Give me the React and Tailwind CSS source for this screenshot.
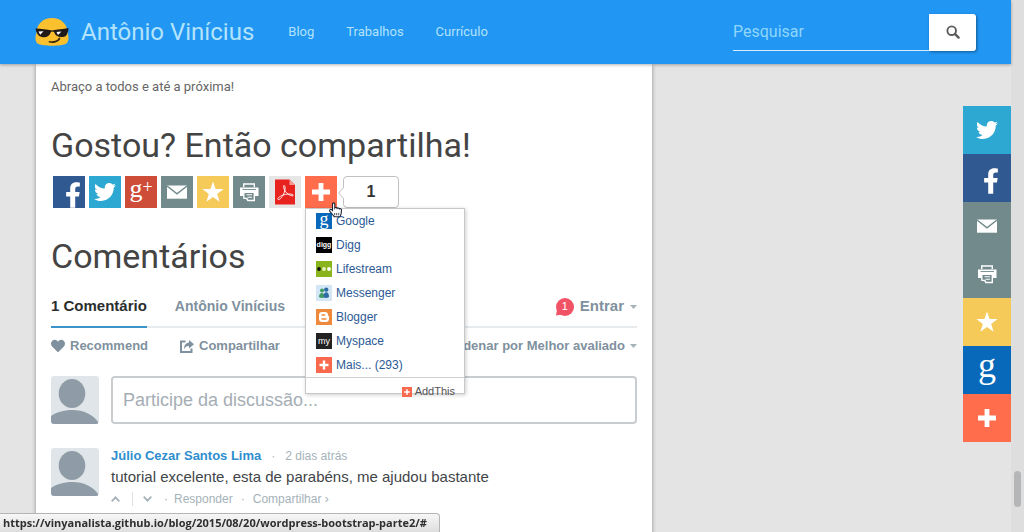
import React from "react";
import { FaTwitter, FaFacebookF, FaHeart } from "react-icons/fa";

function SunglassesFace() {
  return (
    <svg viewBox="0 0 34 30" className="h-[30px] w-[34px]" aria-hidden="true">
      <path d="M1.5 16C1.5 7 8 1 17 1s15.5 6 15.5 15c1.500 4 1.500 8-1 10.500C27 29.500 7 29.500 2.500 26.500 0 24 0 20 1.500 16z" fill="#fbc02d" />
      <path d="M.5 11.500C6 12 12 12.300 17 13.500c5-1.200 11-1.500 16.500-2.500l-.3 3.200c-.9.6-.8 5-4.200 5.500-5.500.9-8.500-.7-10-4.700-.7-.8-2.600-.8-3.200.2-1.400 4-4.600 5.700-9 4.800-4.400-.8-4.700-4.800-5.600-5.500z" fill="#1f1a17" />
      <path d="M3.500 14.500l5-.3-3.300 3.600zM21.500 15l5-.5-3.500 3.600z" fill="#fff" />
      <path d="M14.500 24.800c4 1 8.500-.3 10-3.300" stroke="#3b2a10" strokeWidth="1.700" fill="none" strokeLinecap="round" />
    </svg>
  );
}

function SearchGlyph() {
  return (
    <svg viewBox="0 0 14 14" className="h-3.5 w-3.5" fill="none" stroke="#5c5c5c" aria-hidden="true">
      <circle cx="5.700" cy="5.700" r="4.300" strokeWidth="1.900" />
      <path d="M8.900 8.900l3.700 3.700" strokeWidth="2.400" strokeLinecap="round" />
    </svg>
  );
}

function Envelope() {
  return (
    <svg viewBox="0 0 32 32" className="h-8 w-8" aria-hidden="true">
      <path d="M6 9.500h20v13.200H6z" fill="#fff" />
      <path d="M6 10l10 7.800L26 10" stroke="#738a8d" strokeWidth="1.500" fill="none" />
    </svg>
  );
}

function Printer() {
  return (
    <svg viewBox="0 0 32 32" className="h-8 w-8" aria-hidden="true">
      <path d="M10.700 11V8h10.600v3" stroke="#fff" strokeWidth="1.400" fill="none" />
      <path d="M7 11.500h18.500V20H22v-3.500H10.500V20H7z" fill="#fff" />
      <path d="M9.500 13.500h13.500" stroke="#738a8d" strokeWidth=".9" />
      <path d="M10.800 16.200v6l3 .3 1 2h6.500v-8.300z" stroke="#fff" strokeWidth="1.400" fill="#738a8d" />
      <path d="M13.500 18.700h5.500M14.500 21.300h4.500" stroke="#fff" strokeWidth="1.100" />
    </svg>
  );
}

function Star() {
  return (
    <svg viewBox="0 0 32 32" className="h-8 w-8" fill="#fff" aria-hidden="true">
      <path d="M16 5.500l2.600 7.600h8l-6.400 4.800 2.400 7.900L16 21l-6.600 4.800 2.400-7.900-6.400-4.800h8z" />
    </svg>
  );
}

function Plus({ className }) {
  return (
    <svg viewBox="0 0 32 32" className={className} fill="#fff" aria-hidden="true">
      <path d="M13.600 7h4.800v6.600H25v4.800h-6.600V25h-4.800v-6.600H7v-4.800h6.600z" />
    </svg>
  );
}

function Pdf() {
  return (
    <svg viewBox="0 0 32 32" className="h-8 w-8" aria-hidden="true">
      <path d="M6 3.500h14.500L26 9v19.500H6z" fill="#e8231f" />
      <path d="M20.500 3.500V9H26z" fill="#f59a94" />
      <path d="M15 9.500c1.800 0 1.300 5-.4 8.500-1.600 3.400-4.200 6.300-5.600 5.400-1.500-1.200 3.200-4.200 7.500-5 3.800-.7 7.800-.4 7.700.9-.2 1.600-5.200-.4-7.500-3.500-1.900-2.500-2.700-6.300-1.700-6.300z" fill="none" stroke="#fff" strokeWidth=".9" />
    </svg>
  );
}

function Avatar() {
  return (
    <svg viewBox="0 0 48 48" className="h-12 w-12 shrink-0 rounded-[3px]" role="img" aria-label="Avatar">
      <path d="M0 0h48v48H0z" fill="#dfe5e8" />
      <ellipse cx="21" cy="17.500" rx="13.300" ry="14.500" fill="#8f9ca7" />
      <path d="M0 48v-8c5-3.500 12.500-6 21.500-6 11 0 20.500 4.500 25.500 12v2z" fill="#8f9ca7" />
    </svg>
  );
}

function Caret() {
  return (
    <svg viewBox="0 0 7 4" className="h-1 w-[7px]" fill="#a5b2b9" aria-hidden="true">
      <path d="M0 0h7L3.500 4z" />
    </svg>
  );
}

function ShareGlyph() {
  return (
    <svg viewBox="0 0 14 13" className="h-[13px] w-3.5" aria-hidden="true">
      <path d="M5.500 1.500H1v10.500h10.500V8.500" fill="none" stroke="#7f919e" strokeWidth="2" />
      <path d="M9 0l5 4.200-5 4.300V6C6.500 6 5 7 4 9.300 4 5.500 5.700 3 9 2.600z" fill="#7f919e" />
    </svg>
  );
}

function HandCursor() {
  return (
    <svg viewBox="0 0 14 16" className="pointer-events-none absolute left-6 top-[26px] z-20 h-4 w-3.5" aria-hidden="true">
      <path d="M3.500 8.500V2c0-1.500 2.300-1.500 2.300 0v4c.5-.8 2-.8 2.300.3.600-.7 1.900-.5 2.200.6.700-.6 2.200-.3 2.200 1.100 0 3-.2 4.500-1.500 6.800H5.200C4.200 12.500 1.800 11 .7 9c-.4-1.300 1-2 1.800-1.300z" fill="#fff" stroke="#1c2333" strokeWidth="1.100" />
      <path d="M5.700 11v2.300M7.700 11v2.300M9.700 11v2.300" stroke="#1c2333" strokeWidth=".8" />
    </svg>
  );
}

function BuddyIcon() {
  return (
    <svg viewBox="0 0 16 16" className="h-4 w-4" aria-hidden="true">
      <circle cx="6" cy="5.500" r="2" fill="#3f9a63" />
      <path d="M3 12c0-5.500 5.500-5.500 6 0-2 1.300-4.500 1.300-6 0z" fill="#3f9a63" />
      <circle cx="10.200" cy="4.600" r="2.200" fill="#2e6ca6" />
      <path d="M7.400 12c-.3-6.500 5.900-6.500 5.600 0-1.800 1.400-4 1.400-5.600 0z" fill="#2e6ca6" />
    </svg>
  );
}

function BloggerIcon() {
  return (
    <svg viewBox="0 0 16 16" className="h-4 w-4" aria-hidden="true">
      <path d="M6 3h3c2 0 3 1.200 3 3 0 .8.300 1 1 1v3c0 1.900-1.200 3-3 3H6c-1.900 0-3-1.200-3-3V6c0-1.900 1.200-3 3-3z" fill="#fff" />
      <path d="M6 6h2.700M6 10h4" stroke="#ef8a3c" strokeWidth="1.300" strokeLinecap="round" />
    </svg>
  );
}

function LifestreamIcon() {
  return (
    <svg viewBox="0 0 16 16" className="h-4 w-4" aria-hidden="true">
      <circle cx="3" cy="8" r="1.900" fill="#111" />
      <circle cx="8" cy="8" r="1.900" fill="#e9f3c2" />
      <circle cx="13" cy="8" r="1.900" fill="#fff" />
    </svg>
  );
}

const shareButtons = [
  { name: "Facebook", bg: "bg-[#305891]", icon: <FaFacebookF className="ml-2 mt-1.5 h-[26px] w-4" /> },
  { name: "Twitter", bg: "bg-[#2ca8d2]", icon: <FaTwitter className="h-[22px] w-[22px]" /> },
  { name: "Google+", bg: "bg-[#ce4d39]", icon: <span className="flex pb-1.5 font-['Liberation_Serif',serif] leading-6"><span className="text-[26px]">g</span><span className="text-lg leading-5">+</span></span> },
  { name: "Email", bg: "bg-[#738a8d]", icon: <Envelope /> },
  { name: "Favoritos", bg: "bg-[#f5ca59]", icon: <Star /> },
  { name: "Imprimir", bg: "bg-[#738a8d]", icon: <Printer /> },
  { name: "PDF", bg: "bg-[#e6e6e6]", icon: <Pdf /> },
];

const menuItems = [
  { name: "Google", bg: "bg-[#0868b9]", icon: <span className="pb-1 font-['Liberation_Serif',serif] text-lg leading-3">g</span> },
  { name: "Digg", bg: "bg-black", icon: <span className="text-[7px] font-bold leading-4">digg</span> },
  { name: "Lifestream", bg: "bg-[#8ab41d]", icon: <LifestreamIcon /> },
  { name: "Messenger", bg: "bg-[#d3e6f5]", icon: <BuddyIcon /> },
  { name: "Blogger", bg: "bg-[#ef8a3c]", icon: <BloggerIcon /> },
  { name: "Myspace", bg: "bg-[#222222]", icon: <span className="text-[9px] leading-3">my</span> },
  { name: "Mais... (293)", bg: "bg-[#f8694d]", icon: <Plus className="h-4 w-4" /> },
];

const sideButtons = [
  { name: "Twitter", bg: "bg-[#2ca8d2]", icon: <FaTwitter className="h-[22px] w-[22px]" /> },
  { name: "Facebook", bg: "bg-[#305891]", icon: <FaFacebookF className="ml-2 mt-1.5 h-[26px] w-4" /> },
  { name: "Email", bg: "bg-[#738a8d]", icon: <Envelope /> },
  { name: "Imprimir", bg: "bg-[#738a8d]", icon: <Printer /> },
  { name: "Favoritos", bg: "bg-[#f5ca59]", icon: <Star /> },
  { name: "Google", bg: "bg-[#0868b9]", icon: <span className="pb-2.5 font-['Liberation_Serif',serif] text-4xl leading-6">g</span> },
  { name: "Mais", bg: "bg-[#ff6d4c]", icon: <Plus className="h-8 w-8" /> },
];

function Navbar() {
  return (
    <header className="relative z-10 flex h-16 items-center bg-[#2196f3] pl-[35px] pr-[35px] text-[#b2e3fb] shadow-[0_1px_3px_rgba(0,0,0,0.3)]">
      <a href="#inicio" className="flex items-center gap-3 text-2xl">
        <SunglassesFace />
        Antônio Vinícius
      </a>
      <nav className="ml-[34px] flex gap-8 text-[13px]">
        <a href="#blog">Blog</a>
        <a href="#trabalhos">Trabalhos</a>
        <a href="#curriculo">Currículo</a>
      </nav>
      <form className="ml-auto flex" role="search">
        <input
          type="search"
          aria-label="Pesquisar"
          placeholder="Pesquisar"
          className="h-[37px] w-49 border-b border-[#d3eafd] bg-transparent text-base outline-none placeholder:text-[#8fd6fa]"
        />
        <button type="button" aria-label="Buscar" className="flex h-[37px] w-[47px] items-center justify-center rounded-r-[3px] bg-white shadow-[1px_1px_3px_rgba(0,0,0,0.4)]">
          <SearchGlyph />
        </button>
      </form>
    </header>
  );
}

function ShareMenu() {
  return (
    <div className="absolute left-0 top-8 z-10 w-40 border border-[#c8c8c8] bg-white font-['Liberation_Sans',sans-serif] text-xs text-[#2c5a96] shadow-[1px_1px_4px_rgba(0,0,0,0.2)]">
      <ul>
        {menuItems.map((item) => (
          <li key={item.name}>
            <a href="#compartilhar" className="flex h-6 items-center gap-1 pl-2.5">
              <span className={`flex h-4 w-4 items-center justify-center text-white ${item.bg}`} aria-hidden="true">{item.icon}</span>
              {item.name}
            </a>
          </li>
        ))}
      </ul>
      <a href="#addthis" className="flex h-4 items-end justify-end border-t border-[#d0d0d0] pr-[9px] text-[11px] leading-none text-[#555]">
        <span className="flex translate-y-1 items-center gap-[3px]">
          <span className="bg-[#f8694d]"><Plus className="h-2.5 w-2.5" /></span>
          AddThis
        </span>
      </a>
    </div>
  );
}

function ShareBar() {
  return (
    <div className="mt-3 flex gap-1 pl-0.5">
      {shareButtons.map((b) => (
        <a key={b.name} href="#compartilhar" aria-label={b.name} className={`flex h-8 w-8 items-center justify-center text-white ${b.bg}`}>
          {b.icon}
        </a>
      ))}
      <div className="relative">
        <button type="button" aria-label="Mais opções" className="block bg-[#ff6d4c]">
          <Plus className="h-8 w-8" />
        </button>
        <ShareMenu />
        <HandCursor />
      </div>
      <div className="relative ml-0.5 flex h-8 w-14 items-center justify-center rounded-[4px] border border-[#c0c0c0] bg-white font-['Liberation_Sans',sans-serif] text-base font-bold text-[#333]">
        <svg viewBox="0 0 6 12" className="absolute -left-1.5 top-2.5 h-3 w-1.5" aria-hidden="true">
          <path d="M6 0L.7 6 6 12" fill="#fff" stroke="#c0c0c0" />
        </svg>
        1
      </div>
    </div>
  );
}

function Comments() {
  return (
    <section className="font-['Liberation_Sans',sans-serif] text-[#7f919e]">
      <div className="mt-3 flex border-b-2 border-[#e7ebee] text-[15px] font-bold">
        <a href="#comentarios" className="-mb-0.5 flex h-[41px] items-center border-b-2 border-[#3c93c9] text-[#2a2e2e]">1 Comentário</a>
        <a href="#autor" className="ml-7 flex h-[38px] items-center text-sm">Antônio Vinícius</a>
        <button type="button" className="ml-auto flex h-[39px] items-center gap-1.5 font-bold">
          <span className="relative flex h-[18px] w-[18px] items-center justify-center rounded-full bg-[#f05266] text-[11px] font-normal text-white">
            <svg viewBox="0 0 6 6" className="absolute bottom-0 left-0 h-1.5 w-1.5" fill="#f05266" aria-hidden="true"><path d="M0 5.500L1 0l5 4.500z" /></svg>
            1
          </span>
          Entrar
          <Caret />
        </button>
      </div>
      <div className="mt-2 flex h-5 items-center text-[13px] font-bold">
        <button type="button" className="flex items-center gap-[5px] font-bold"><FaHeart className="h-3.5 w-3.5" />Recommend</button>
        <button type="button" className="ml-8 flex items-center gap-[5px] font-bold"><ShareGlyph />Compartilhar</button>
        <button type="button" className="ml-auto flex items-center gap-[5px] font-bold">Ordenar por Melhor avaliado<Caret /></button>
      </div>
      <div className="mt-5 flex gap-3">
        <Avatar />
        <input
          type="text"
          aria-label="Participe da discussão"
          placeholder="Participe da discussão..."
          className="h-12 min-w-0 flex-1 rounded-[4px] border-2 border-[#c9cdd0] bg-white px-2.5 text-lg outline-none placeholder:text-[#a5aeb5]"
        />
      </div>
      <article className="mt-6 flex gap-3">
        <Avatar />
        <div className="min-w-0 text-xs text-[#a5b2b9]">
          <p className="flex h-4 items-center">
            <a href="#julio" className="text-[13px] font-bold text-[#2e8ece]">Júlio Cezar Santos Lima</a>
            <span className="mx-2.5">·</span>
            2 dias atrás
          </p>
          <p className="mt-px text-[15px] leading-6 text-[#3f4549]">tutorial excelente, esta de parabéns, me ajudou bastante</p>
          <div className="mt-0.5 flex h-4 items-center">
            <button type="button" aria-label="Votar a favor" className="mr-3">
              <svg viewBox="0 0 9 6" className="h-1.5 w-[9px]" fill="none" stroke="#a5b2b9" strokeWidth="1.800"><path d="M.7 5.300l3.800-4 3.800 4" /></svg>
            </button>
            <span className="h-3.5 border-l border-[#dbe0e3]" />
            <button type="button" aria-label="Votar contra" className="ml-2.5 mr-1.5">
              <svg viewBox="0 0 9 6" className="h-1.5 w-[9px]" fill="none" stroke="#a5b2b9" strokeWidth="1.800"><path d="M.7.7l3.800 4 3.800-4" /></svg>
            </button>
            <span className="mx-1.5">·</span>
            <a href="#responder">Responder</a>
            <span className="mx-2">·</span>
            <a href="#compartilhar">Compartilhar ›</a>
          </div>
        </div>
      </article>
    </section>
  );
}

export default function App() {
  return (
    <div className="flex h-screen overflow-hidden bg-[#e4e4e4] font-['Roboto',sans-serif]">
      <div className="flex min-w-0 flex-1 flex-col">
        <Navbar />
        <div className="flex min-h-0 flex-1 items-start">
          <main className="ml-9 min-h-full w-[61%] max-w-[616px] bg-white px-[15px] pb-10 text-[#444] shadow-[0_1px_4px_rgba(0,0,0,0.4)]">
            <p className="pt-3 text-[13px] leading-[22px] text-[#666]">Abraço a todos e até a próxima!</p>
            <h2 className="mt-7 text-[34px] leading-[38px]">Gostou? Então compartilha!</h2>
            <ShareBar />
            <h2 className="mt-[29px] text-[34px] leading-[38px]">Comentários</h2>
            <Comments />
          </main>
          <aside className="ml-auto mt-[42px] flex flex-col">
            {sideButtons.map((b) => (
              <a key={b.name} href="#compartilhar" aria-label={b.name} className={`flex h-12 w-12 items-center justify-center text-white ${b.bg}`}>
                {b.icon}
              </a>
            ))}
          </aside>
        </div>
      </div>
      <div className="flex w-[13px] flex-col items-center justify-end bg-[#dedede] pb-[25px]" aria-hidden="true">
        <span className="h-9 w-[7px] rounded-full bg-[#b5b6b8]" />
      </div>
      <div className="fixed bottom-0 left-0 z-30 flex h-[19px] items-center rounded-tr-[4px] border-r border-t border-[#b5b5b5] bg-linear-to-b from-[#f7f7f7] to-[#dedede] pl-[3px] pr-3 font-['Open_Sans',sans-serif] text-[11px] font-bold text-[#2e2e2e]">
        https://vinyanalista.github.io/blog/2015/08/20/wordpress-bootstrap-parte2/#
      </div>
    </div>
  );
}
